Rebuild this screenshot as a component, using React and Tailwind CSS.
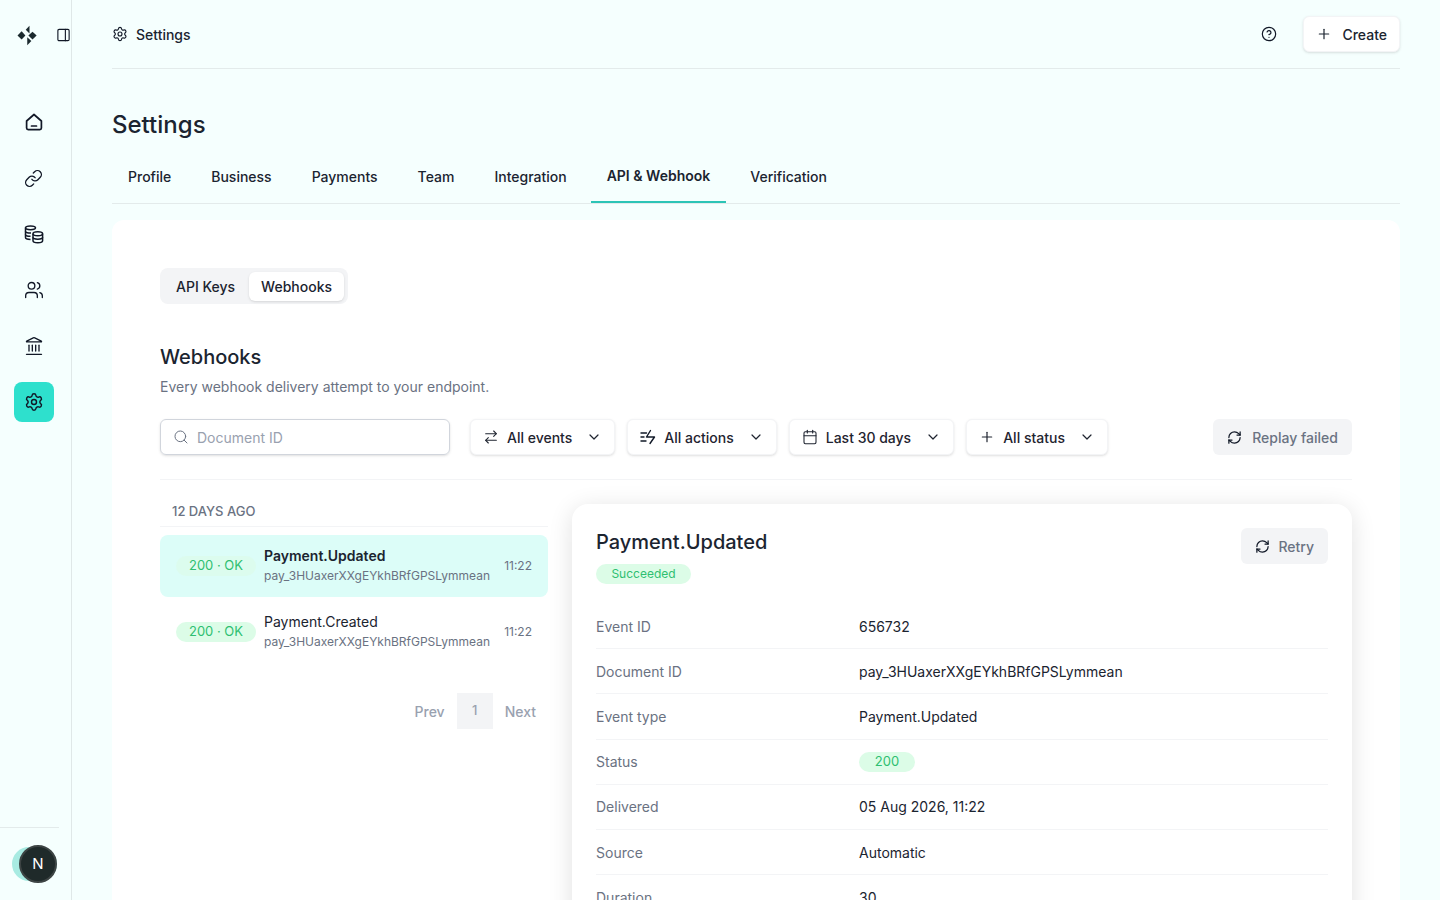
import React from 'react'
import { Link, Users, Landmark, Settings, PanelRight, CircleHelp, Plus, Search, ArrowRightLeft, Calendar, ChevronDown, RefreshCw } from 'lucide-react'

const Logo = () => (
  <svg width="28" height="28" viewBox="0 0 28 28" fill="#1b2a2e">
    <path d="M2 14.5 L7.5 9 L12.5 14.5 L7.5 20 Z" />
    <path d="M16.5 14.5 L22 9.5 L27.5 14.5 L22 20 Z" />
    <path d="M14 7 L19 1.5 L19 12 Z" transform="translate(-1 0)" />
    <path d="M15 17 L15 27.5 L20.5 22 Z" />
  </svg>
)

const HomeIcon = () => (
  <svg width="20" height="20" viewBox="0 0 20 20" fill="none" stroke="#111827" strokeWidth="1.7" strokeLinejoin="round" strokeLinecap="round">
    <path d="M2.6 9 L10 2.5 L17.4 9 V16 A1.6 1.6 0 0 1 15.8 17.6 H4.2 A1.6 1.6 0 0 1 2.6 16 Z" />
    <path d="M7.5 14 H12.5" />
  </svg>
)

const CoinsIcon = () => (
  <svg width="20" height="20" viewBox="0 0 20 20" fill="none" stroke="#111827" strokeWidth="1.5">
    <ellipse cx="6.5" cy="3.8" rx="5" ry="1.9" />
    <path d="M1.5 3.8 V13.5 C1.5 14.8 3.5 15.4 6.5 15.4" />
    <path d="M1.5 7.2 C1.5 8.5 3.5 9 7 9" />
    <path d="M1.5 10.5 C1.5 11.8 3.5 12.3 6.5 12.3" />
    <ellipse cx="13.8" cy="9.8" rx="4.8" ry="2" />
    <path d="M9 9.8 V16.8 C9 18 11 18.8 13.8 18.8 C16.6 18.8 18.6 18 18.6 16.8 V9.8" />
    <path d="M9 13.3 C9 14.5 11 15.2 13.8 15.2 C16.6 15.2 18.6 14.5 18.6 13.3" />
  </svg>
)

const ActionsIcon = () => (
  <svg width="16" height="16" viewBox="0 0 16 16" fill="none" stroke="#111827" strokeWidth="1.4" strokeLinecap="round" strokeLinejoin="round">
    <path d="M10.5 1.5 L6.5 8 H14.5 L10 14.5" />
    <path d="M1 4 H6.5 M1 8 H4 M1 12 H6" />
  </svg>
)

const navItems = [
  <HomeIcon />,
  <Link size={19} strokeWidth={1.7} color="#111827" />,
  <CoinsIcon />,
  <Users size={20} strokeWidth={1.6} color="#111827" />,
  <Landmark size={20} strokeWidth={1.6} color="#111827" />,
]

const tabs = ['Profile', 'Business', 'Payments', 'Team', 'Integration', 'API & Webhook', 'Verification']

const FilterButton = ({ icon, label }) => (
  <button className="flex h-9 items-center gap-2 rounded-md border border-gray-100 bg-white px-3 text-[14px] font-medium text-[#1f2430] shadow-sm">
    {icon}
    <span>{label}</span>
    <ChevronDown size={16} strokeWidth={1.8} className="ml-1.5" />
  </button>
)

const Delivery = ({ title, active }) => (
  <div className={`flex h-[62px] items-center rounded-lg pl-4 pr-4 ${active ? 'bg-[#dcfdf8]' : ''}`}>
    <span className={`flex h-5 w-20 items-center justify-center rounded-full text-[13px] text-[#2fbf71] ${active ? 'bg-[#dcfce7]/60' : 'bg-[#dcfce7]'}`}>200 · OK</span>
    <div className="ml-2 flex-1">
      <div className={`text-[14px] leading-5 text-[#1b2430] ${active ? 'font-semibold' : ''}`}>{title}</div>
      <div className="text-[12px] leading-5 text-gray-500">pay_3HUaxerXXgEYkhBRfGPSLymmean</div>
    </div>
    <span className="text-[12px] text-gray-500">11:22</span>
  </div>
)

const details = [
  ['Event ID', '656732'],
  ['Document ID', 'pay_3HUaxerXXgEYkhBRfGPSLymmean'],
  ['Event type', 'Payment.Updated'],
  ['Status', null],
  ['Delivered', '05 Aug 2026, 11:22'],
  ['Source', 'Automatic'],
  ['Duration', '30'],
]

const App = () => {
  return (
    <div className="flex h-screen overflow-hidden bg-[#f5fffe] font-[Inter,sans-serif] text-[#1b2430]">
      <aside className="flex w-[72px] shrink-0 flex-col border-r border-[#dfe8e8]">
        <div className="flex h-[70px] items-center gap-[19px] pl-4">
          <Logo />
          <PanelRight size={20} strokeWidth={1.8} color="#111827" />
        </div>
        <nav className="mt-8 flex flex-col items-center gap-4 pr-[4px]">
          {navItems.map((icon, i) => (
            <div key={i} className="flex h-10 w-10 items-center justify-center">{icon}</div>
          ))}
          <div className="flex h-10 w-10 items-center justify-center rounded-lg bg-[#2ee0cd]">
            <Settings size={20} strokeWidth={1.7} color="#111827" />
          </div>
        </nav>
        <div className="mt-auto ml-0 mr-3 flex h-[73px] items-center border-t border-[#e3ebeb] pl-3">
          <div className="flex h-[34px] w-[45px] items-center justify-end rounded-full bg-[#a8ebe2]">
            <div className="flex h-[38px] w-[38px] items-center justify-center rounded-full border-2 border-[#3d4444] bg-[#1f2a2a] text-[15px] text-white">N</div>
          </div>
        </div>
      </aside>

      <main className="flex-1 px-10">
        <header className="flex h-[69px] items-center justify-between border-b border-[#e3ebeb]">
          <div className="flex items-center gap-2 text-[14px] font-medium">
            <Settings size={16} strokeWidth={1.7} color="#111827" />
            Settings
          </div>
          <div className="flex items-center gap-[26px]">
            <CircleHelp size={16} strokeWidth={1.8} color="#111827" />
            <button className="flex h-9 items-center gap-2.5 rounded-md border border-gray-100 bg-white px-3 text-[14px] font-medium shadow-sm">
              <Plus size={16} strokeWidth={1.8} />
              Create
            </button>
          </div>
        </header>

        <h1 className="mt-[40px] text-[24px] font-medium leading-8">Settings</h1>

        <div className="mt-[7px] flex h-[56px] border-b border-[#e3ebeb]">
          {tabs.map((t, i) => (
            <div key={t} className={`flex items-center px-4 pt-px text-[14px] mr-2 font-medium ${i === 5 ? 'border-b-2 border-[#2cc4b6] font-semibold' : ''}`}>{t}</div>
          ))}
        </div>

        <section className="mt-4 h-[800px] rounded-xl bg-white px-12 pt-12">
          <div className="inline-flex h-9 items-center gap-0.5 rounded-lg bg-gray-100 p-1 text-[14px] font-medium">
            <div className="px-3">API Keys</div>
            <div className="rounded-md bg-white px-3 py-1 shadow-sm">Webhooks</div>
          </div>

          <h2 className="mt-[37px] text-[20px] font-medium leading-8">Webhooks</h2>
          <p className="mt-[2px] text-[14px] leading-6 text-gray-500">Every webhook delivery attempt to your endpoint.</p>

          <div className="mt-[20px] flex items-center border-b border-gray-100 pb-6">
            <div className="mr-5 flex h-9 w-[290px] items-center gap-2 rounded-md border border-gray-300 px-3 text-[14px] text-gray-400 shadow-sm">
              <Search size={16} strokeWidth={1.5} className="text-gray-500" />
              Document ID
            </div>
            <div className="flex gap-3">
              <FilterButton icon={<ArrowRightLeft size={16} strokeWidth={1.6} />} label="All events" />
              <FilterButton icon={<ActionsIcon />} label="All actions" />
              <FilterButton icon={<Calendar size={16} strokeWidth={1.6} />} label="Last 30 days" />
              <FilterButton icon={<Plus size={16} strokeWidth={1.8} />} label="All status" />
            </div>
            <button className="ml-auto flex h-9 items-center gap-2.5 rounded-md bg-gray-100 px-3.5 text-[14px] font-medium text-gray-500">
              <RefreshCw size={15} strokeWidth={2} color="#111827" />
              Replay failed
            </button>
          </div>

          <div className="mt-6 flex items-start gap-6">
            <div className="w-[388px] shrink-0">
              <div className="flex h-[23px] items-start border-b border-gray-100 pl-3 text-[13px] leading-[14px] font-medium text-gray-500">12 DAYS AGO</div>
              <div className="mt-2 flex flex-col gap-1">
                <Delivery title="Payment.Updated" active />
                <Delivery title="Payment.Created" />
              </div>
              <div className="mt-[30px] flex items-center justify-end gap-3 pr-3 text-[14px] font-medium text-gray-400">
                <span>Prev</span>
                <span className="flex h-9 w-9 items-center justify-center bg-gray-100 text-[13px]">1</span>
                <span>Next</span>
              </div>
            </div>

            <div className="flex-1 rounded-2xl bg-white p-6 shadow-[0_4px_24px_rgba(0,0,0,0.12)]">
              <div className="flex items-start justify-between">
                <div>
                  <h3 className="text-[20px] font-medium leading-7">Payment.Updated</h3>
                  <span className="mt-[8px] flex h-[20px] w-[95px] items-center justify-center rounded-full bg-[#dcfce7] text-[12px] text-[#2fbf71]">Succeeded</span>
                </div>
                <button className="flex h-9 items-center gap-2 rounded-md bg-gray-100 px-3.5 text-[14px] font-medium text-gray-500">
                  <RefreshCw size={15} strokeWidth={2} color="#111827" />
                  Retry
                </button>
              </div>
              <div className="mt-5">
                {details.map(([k, v]) => (
                  <div key={k} className="flex h-[45.2px] items-center border-b border-gray-100 text-[14px]">
                    <span className="w-[263px] text-gray-500">{k}</span>
                    {v ? <span>{v}</span> : <span className="flex h-5 w-14 items-center justify-center rounded-full bg-[#dcfce7] text-[13px] text-[#2fbf71]">200</span>}
                  </div>
                ))}
              </div>
            </div>
          </div>
        </section>
      </main>
    </div>
  )
}

export default App
